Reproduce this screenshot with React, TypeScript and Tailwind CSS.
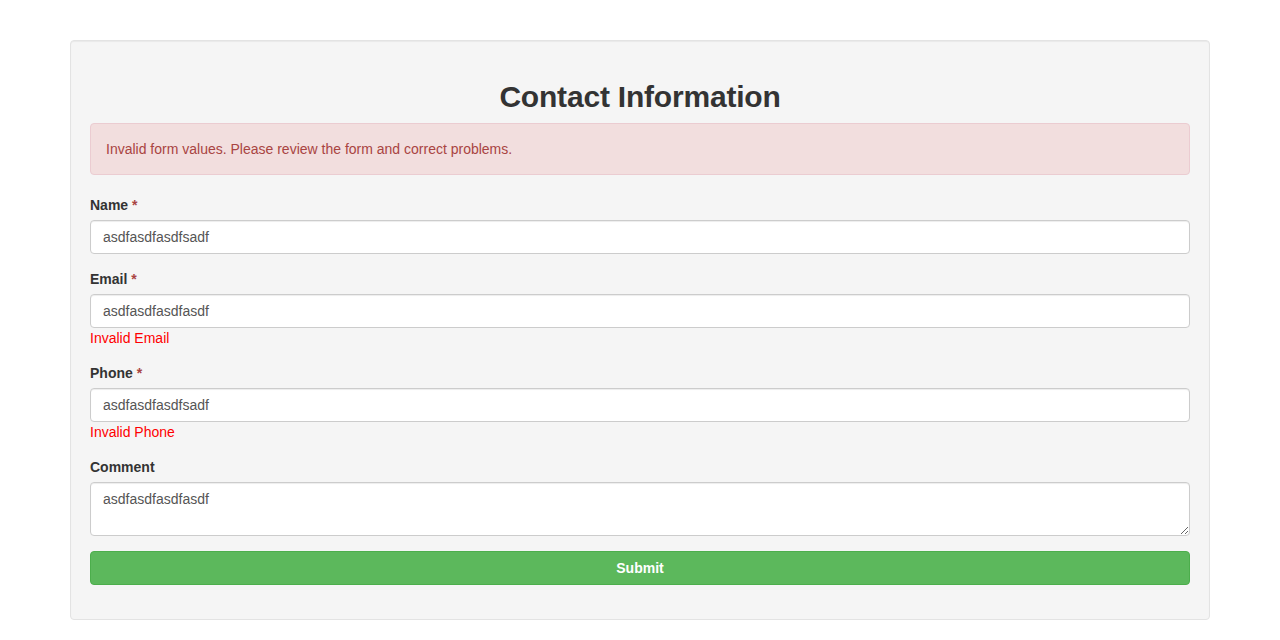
import React from "react";

const font = { fontFamily: '"Liberation Sans", Arial, Helvetica, sans-serif' };

function Label({ text, required }: { text: string; required?: boolean }) {
  return (
    <label className="block mb-[5px] text-[14px] leading-[20px] font-bold text-[#333]">
      {text}
      {required && <span className="text-[#a94442]"> *</span>}
    </label>
  );
}

const inputCls =
  "block w-full h-[34px] px-[12px] py-[6px] text-[14px] leading-[20px] text-[#555] bg-white border border-[#ccc] rounded-[4px] shadow-[inset_0_1px_1px_rgba(0,0,0,0.075)] outline-none";

export default function App() {
  return (
    <div className="w-[1280px] h-[640px] bg-white" style={font}>
      <div className="pt-[40px] px-[70px]">
        <div className="bg-[#f5f5f5] border border-[#e3e3e3] rounded-[4px] px-[19px] pt-[19px] pb-[34px] shadow-[inset_0_1px_1px_rgba(0,0,0,0.05)]">
          <h2 className="mt-[20px] mb-[10px] text-center text-[30px] leading-[33px] font-bold text-[#333] tracking-[-0.2px]">
            Contact Information
          </h2>
          <div className="mb-[20px] p-[15px] border border-[#ebccd1] bg-[#f2dede] text-[#a94442] rounded-[4px] text-[14px] leading-[20px]">
            Invalid form values. Please review the form and correct problems.
          </div>
          <div className="mb-[15px]">
            <Label text="Name" required />
            <input className={inputCls} defaultValue="asdfasdfasdfsadf" />
          </div>
          <div className="mb-[15px]">
            <Label text="Email" required />
            <input className={inputCls} defaultValue="asdfasdfasdfasdf" />
            <div className="text-[14px] leading-[20px] text-[#ff0000]">Invalid Email</div>
          </div>
          <div className="mb-[15px]">
            <Label text="Phone" required />
            <input className={inputCls} defaultValue="asdfasdfasdfsadf" />
            <div className="text-[14px] leading-[20px] text-[#ff0000]">Invalid Phone</div>
          </div>
          <div className="mb-[15px]">
            <Label text="Comment" />
            <textarea
              className="block w-full h-[54px] px-[12px] py-[6px] text-[14px] leading-[20px] text-[#555] bg-white border border-[#ccc] rounded-[4px] shadow-[inset_0_1px_1px_rgba(0,0,0,0.075)] outline-none"
              rows={2}
              defaultValue="asdfasdfasdfasdf"
            />
          </div>
          <button className="block w-full h-[34px] bg-[#5cb85c] border border-[#4cae4c] rounded-[4px] text-white text-[14px] leading-[20px] font-bold">
            Submit
          </button>
        </div>
      </div>
    </div>
  );
}
